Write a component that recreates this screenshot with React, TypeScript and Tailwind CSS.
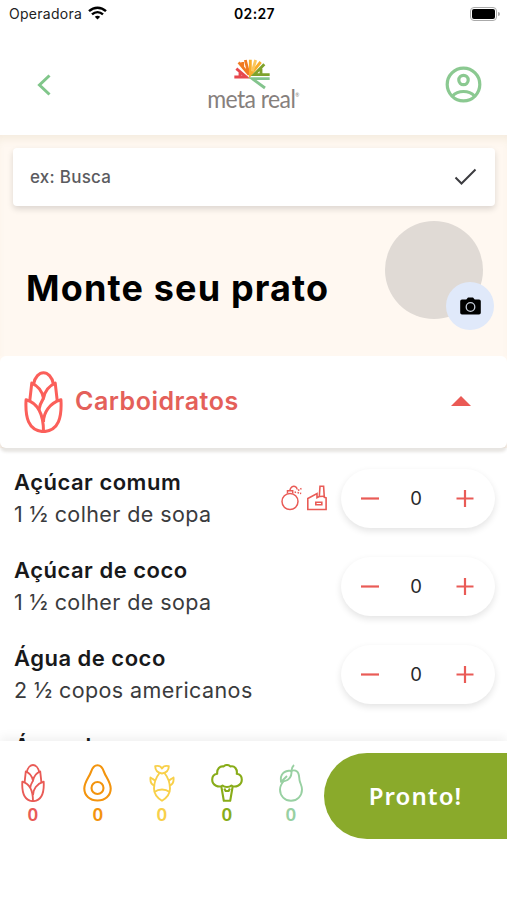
import React, { useState } from 'react';

interface Food {
  name: string;
  portion?: string;
  flagged?: boolean;
}

const FOODS: Food[] = [
  { name: 'Açúcar comum', portion: '1 ½ colher de sopa', flagged: true },
  { name: 'Açúcar de coco', portion: '1 ½ colher de sopa' },
  { name: 'Água de coco', portion: '2 ½ copos americanos' },
];

const CornIcon = ({ className, stroke = 9 }: { className: string; stroke?: number }) => (
  <svg className={className} viewBox="73 61 116 185" fill="none" stroke="currentColor" strokeWidth={stroke} strokeLinejoin="round">
    <path d="M101 101C105 78 119 66 131 66s26 12 30 35" />
    <path d="M90 150l6-53c18 8 31 24 35 45 4-21 17-37 35-45l6 53" />
    <path d="M131 242c-46-3-55-43-52-95 32 9 52 38 52 95z" />
    <path d="M131 242c46-3 55-43 52-95-34 10-52 38-52 66" />
    <path d="M117 178c2-14 8-26 14-36" />
  </svg>
);

const AvocadoIcon = () => (
  <svg className="h-[38px] w-[29px]" viewBox="0 0 29 38" fill="none" stroke="currentColor" strokeWidth="2.100">
    <path d="M14.500 1.300c-4 0-5.300 3-6.500 6.500C6.300 13 1.300 18 1.300 24.500c0 7.300 5.700 12 13.200 12s13.200-4.700 13.200-12C27.700 18 22.700 13 21 7.800c-1.200-3.500-2.500-6.500-6.500-6.500z" />
    <circle cx="14.500" cy="24" r="6" />
  </svg>
);

const FishIcon = () => (
  <svg className="h-[38px] w-[26px]" viewBox="0 0 26 38" fill="none" stroke="currentColor" strokeWidth="1.900" strokeLinejoin="round">
    <path d="M13 9.500C8 8.500 6.200 6 6.200 2.200c3.200-.8 5.600 0 6.800 2.300 1.200-2.300 3.600-3.100 6.800-2.300 0 3.800-1.800 6.300-6.800 7.300z" />
    <path d="M10.500 9C7 13.500 5 18.500 5 24.500c0 5.500 3.500 9.500 8 12.300 4.500-2.800 8-6.800 8-12.300 0-6-2-11-5.500-15.500" />
    <path d="M5.300 28c4.500-3.300 10.900-3.300 15.400 0" />
    <path d="M5.500 21.500C2 20.500 1 18 1.500 13.500c1.800.8 3 2.500 5.200 3.500M20.500 21.500c3.500-1 4.500-3.500 4-8-1.800.8-3 2.500-5.200 3.500" />
  </svg>
);

const BroccoliIcon = () => (
  <svg className="h-[38px] w-[32px]" viewBox="0 0 32 38" fill="none" stroke="currentColor" strokeWidth="2.100" strokeLinejoin="round">
    <path d="M11.500 21.500C8 24 1.200 21.500 1.200 15.800c0-3.300 2.200-5.600 5-6C5.700 5 9 1.700 12.500 2.500c2.200-1.900 5-1.700 7 0C23.500 1.500 26.500 5 25.800 9.800c2.800.4 5 2.700 5 6 0 5.700-6.800 8.200-10.300 5.700-2 2-7 2-9 0z" />
    <path d="M10.300 22.200l2.500 14.500h6.400l2.500-14.500M13.300 24.500l1.300 2.500h3l1.300-2.500" />
  </svg>
);

const PearIcon = () => (
  <svg className="h-[38px] w-[24px]" viewBox="0 0 24 38" fill="none" stroke="currentColor" strokeWidth="1.900">
    <path d="M11.500 8C13 6.300 16 6 18 7.500c2.500 2 2 6 2.600 9 .6 3 2.400 5.200 2.400 9 0 6.500-4.800 11.300-11 11.300S1 32 1 25.500c0-3.300 1.700-6 3.700-8.500" />
    <path d="M2 17.500C1 10.500 4.500 6.500 12.500 6.500c.5 7-3.500 11-10.500 11zM1.500 18.500L8 12M12.500 7c.2-2.500.8-4.500 2.500-6" />
  </svg>
);

const BombIcon = () => (
  <svg className="h-[26px] w-[22px]" viewBox="0 0 22 26" fill="none" stroke="currentColor" strokeWidth="1.500">
    <circle cx="9" cy="16.500" r="8" />
    <path d="M6.500 8.500V5.800h5.200v2.700M8.800 5.500C9.500 2 12 .8 14 1.500c1.500.5 2 1.500 2.200 3" />
    <path d="M17 5.500l3.500-2M16.500 7.500l3.700 1M14 6.500l1 2.500" strokeDasharray="1.600 1" />
  </svg>
);

const FactoryIcon = () => (
  <svg className="h-[26px] w-[20px]" viewBox="0 0 20 26" fill="none" stroke="currentColor" strokeWidth="1.600">
    <path d="M.8 24.500V13.500L10 8.500v4.200l2.300-1.200L13 1.300h3.600l.7 11 1.800.5v11.700z" />
    <path d="M12.500 11.500l4.500-.2M8.800 17.200h6v2.600h-6z" />
  </svg>
);

// Fan of leaves above the wordmark
const Logo = () => (
  <div className="mr-[12px] mt-[9px] flex h-14 w-[94px] flex-col items-center">
    <svg className="h-[32px] w-[40px] shrink-0" viewBox="100 26 120 96" fill="none" strokeWidth="8.500">
      <path stroke="#e7474d" d="M104 83h36L110 58M121 66v16" />
      <path stroke="#f07b22" d="M117 39l31 37-11-44M129 38v16" />
      <path stroke="#f9ad2b" d="M152 31v45l31-38" />
      <path stroke="#fbc65d" d="M168 32l-10 34" />
      <path stroke="#7fa22c" d="M194 45l-31 31h47M184 58v16" />
      <path stroke="#83c48d" d="M210 88h-52l38 28" />
    </svg>
    <span className="-mt-1 scale-y-110 whitespace-nowrap font-['Lato'] text-[23px] font-normal leading-[24px] tracking-[-0.6px] text-[#86807d]">
      meta real<sup className="relative -top-2.5 align-baseline text-[5px]">®</sup>
    </span>
  </div>
);

const TOTALS = [
  { color: 'text-[#e95b56]', icon: <CornIcon className="h-[38px] w-6" /> },
  { color: 'text-[#f3940d]', icon: <AvocadoIcon /> },
  { color: 'text-[#f8d04a]', icon: <FishIcon /> },
  { color: 'text-[#88ac18]', icon: <BroccoliIcon /> },
  { color: 'text-[#98d0a2]', icon: <PearIcon /> },
];

function Stepper() {
  const [count, setCount] = useState(0);
  return (
    <div className="flex h-[59px] w-[154px] shrink-0 items-center justify-between rounded-full bg-white pl-[19px] pr-[20px] text-[#e95b56] shadow-[0_3px_7px_rgba(0,0,0,0.11)]">
      <button onClick={() => setCount(Math.max(0, count - 1))}>
        <svg className="h-5 w-5" viewBox="0 0 20 20" stroke="currentColor" strokeWidth="2.200">
          <path d="M1 10.500h18" />
        </svg>
      </button>
      <span className="-ml-[3px] mt-0.5 w-[14px] text-center text-[18.500px] text-[#27292b]">{count}</span>
      <button onClick={() => setCount(count + 1)}>
        <svg className="h-5 w-5" viewBox="0 0 20 20" stroke="currentColor" strokeWidth="2.200">
          <path d="M1.500 10.500h17M10 2v17" />
        </svg>
      </button>
    </div>
  );
}

export default function App() {
  return (
    <div className="flex h-[900px] w-[507px] flex-col overflow-hidden bg-white font-['Inter','Liberation_Sans',sans-serif] text-black">
      {/* Status bar */}
      <div className="grid h-7 shrink-0 grid-cols-3 items-center pb-px pl-[9px] pr-[7px]">
        <div className="flex items-center gap-[6px]">
          <span className="text-[14px] tracking-[0.28px] text-[#222]">Operadora</span>
          <svg className="-mt-px h-[14px] w-[19px]" viewBox="0 0 19 14" fill="none" stroke="#000" strokeWidth="2.400">
            <path d="M1 5.200c5-4.700 12-4.700 17 0M4 8.400c3.300-3 7.700-3 11 0" />
            <path d="M9.500 13.500L6.800 10.800c1.600-1.300 3.800-1.300 5.400 0z" fill="#000" stroke="none" />
          </svg>
        </div>
        <span className="text-center text-[14px] font-semibold tracking-[0.4px]">02:27</span>
        <div className="flex items-center justify-end gap-px">
          <div className="h-[14px] w-[27px] rounded-[4px] border border-[#aaa] p-px">
            <div className="h-full rounded-[2px] bg-black" />
          </div>
          <div className="h-1 w-[2px] rounded-r bg-[#aaa]" />
        </div>
      </div>

      <header className="flex h-[107px] shrink-0 items-center justify-between pb-[1px] pl-[36px] pr-[25px]">
        <button className="w-[37px]">
          <svg className="mt-2 h-[22px] w-[15px]" viewBox="0 0 15 22" fill="none" stroke="#80c68a" strokeWidth="3">
            <path d="M13.500 1.500L3.500 11l10 9.500" />
          </svg>
        </button>
        <Logo />
        <svg className="mt-[7px] h-[37px] w-[37px]" viewBox="0 0 37 37" fill="none" stroke="#8bc991" strokeWidth="3.200">
          <circle cx="18.500" cy="18.500" r="16.300" />
          <circle cx="18.500" cy="14" r="4.700" />
          <path d="M7.500 30c5.500-6 16.500-6 22 0" />
        </svg>
      </header>

      <section className="h-[221px] shrink-0 bg-[#fff8f1] px-3 pt-[13px] shadow-[inset_0_8px_8px_-4px_rgba(150,130,60,0.1)]">
        <div className="ml-px flex h-[58px] items-center justify-between rounded bg-white pl-[17px] pr-[18px] shadow-[0_3px_6px_rgba(0,0,0,0.14)]">
          <span className="mt-0.5 text-[17px] font-medium tracking-[0.25px] text-[#5b5b60]">ex: Busca</span>
          <svg className="h-[18px] w-[23px]" viewBox="0 0 23 18" fill="none" stroke="#3c3c40" strokeWidth="2">
            <path d="M1.500 9.500l6 6L21.500 1.500" />
          </svg>
        </div>
        <div className="flex justify-between pl-[14px] pr-px pt-[15px]">
          <h1 className="mt-[45px] whitespace-nowrap text-[36px] font-bold leading-[44px] tracking-[1.150px]">Monte seu prato</h1>
          <div className="relative h-[98px] w-[109px]">
            <div className="h-[98px] w-[98px] rounded-full bg-[#e0dad5]" />
            <div className="absolute -bottom-[11px] right-0 flex h-12 w-12 items-center justify-center rounded-full bg-[#e0e9fa]">
              <svg className="h-[18px] w-[21px]" viewBox="0 0 21 18">
                <path d="M2 2.500h4.300L8 .5h5l1.700 2H19a1.800 1.800 0 0 1 1.800 1.800v11.400a1.800 1.800 0 0 1-1.800 1.800H2A1.800 1.800 0 0 1 .2 15.700V4.300A1.800 1.800 0 0 1 2 2.500z" />
                <circle cx="10.500" cy="10" r="4.300" fill="none" stroke="#c5ccd8" strokeWidth="1.300" />
              </svg>
            </div>
          </div>
        </div>
      </section>

      <div className="shrink-0 bg-[#fff8f1]">
        <div className="relative flex h-[92px] items-center rounded-md bg-white pl-[24px] pr-9 text-[#e4605a] shadow-[0_4px_3px_rgba(60,40,20,0.12)]">
          <CornIcon className="h-[62px] w-[39px] text-[#fb5f5a]" />
          <h2 className="ml-3 flex-1 text-[25px] font-semibold tracking-[0.500px]">Carboidratos</h2>
          <svg className="-mt-0.5 h-[10px] w-5" viewBox="0 0 20 10" fill="#ea5a55">
            <path d="M0 10L10 0l10 10z" />
          </svg>
        </div>
      </div>

      <main className="h-[293px] shrink-0 overflow-hidden pt-[6px]">
        {FOODS.map((food) => (
          <div key={food.name} className="flex h-[88px] items-center pl-[14px] pr-3">
            <div className="flex-1 whitespace-nowrap leading-8">
              <p className="text-[22px] font-semibold tracking-[0.5px] text-[#18191b]">{food.name}</p>
              <p className="text-[21.500px] tracking-[0.4px] text-[#3a3b3d]">{food.portion}</p>
            </div>
            {food.flagged && (
              <div className="mr-[14px] flex gap-[4px] text-[#e95b56]">
                <BombIcon />
                <FactoryIcon />
              </div>
            )}
            <Stepper />
          </div>
        ))}
        <p className="pl-[14px] pt-3 text-[22px] font-semibold leading-8 tracking-[0.5px] text-[#18191b]">Água de</p>
      </main>

      <footer className="relative flex flex-1 items-start justify-between bg-white pt-[12px] shadow-[0_-4px_10px_rgba(0,0,0,0.06)]">
        <div className="flex pl-[0.5px] pt-[11px]">
          {TOTALS.map(({ color, icon }, i) => (
            <div key={i} className={`flex w-[64.600px] flex-col items-center ${color}`}>
              {icon}
              <span className="mt-[3px] origin-center scale-x-110 font-['Noto_Sans'] text-[17px] font-semibold leading-5">0</span>
            </div>
          ))}
        </div>
        <button className="h-[86px] w-[183px] shrink-0 rounded-l-full bg-[#8aaa2b] font-['Noto_Sans'] text-[24px] font-semibold tracking-[1.100px] text-white">
          Pronto!
        </button>
      </footer>
    </div>
  );
}
